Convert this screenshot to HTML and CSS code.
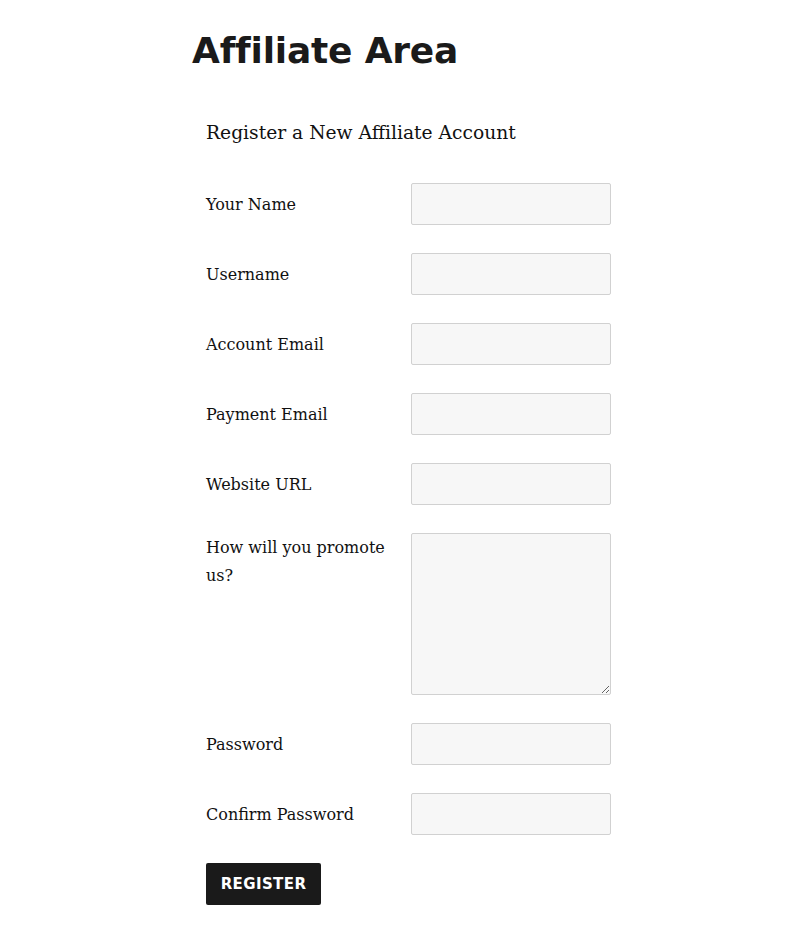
FILE: index.html
```html
<!DOCTYPE html>
<html lang="en">
<head>
<meta charset="utf-8">
<title>Affiliate Area</title>
<link rel="stylesheet" href="styles.css">
</head>
<body>
<main class="page">
  <h1 class="page-title">Affiliate Area</h1>
  <form class="register-form">
    <h3 class="form-title">Register a New Affiliate Account</h3>
    <div class="field">
      <label class="field-label">Your Name</label>
      <input class="field-input" type="text">
    </div>
    <div class="field">
      <label class="field-label">Username</label>
      <input class="field-input" type="text">
    </div>
    <div class="field">
      <label class="field-label">Account Email</label>
      <input class="field-input" type="text">
    </div>
    <div class="field">
      <label class="field-label">Payment Email</label>
      <input class="field-input" type="text">
    </div>
    <div class="field">
      <label class="field-label">Website URL</label>
      <input class="field-input" type="text">
    </div>
    <div class="field">
      <label class="field-label field-label--top">How will you promote us?</label>
      <textarea class="field-input field-textarea"></textarea>
    </div>
    <div class="field">
      <label class="field-label">Password</label>
      <input class="field-input" type="password">
    </div>
    <div class="field">
      <label class="field-label">Confirm Password</label>
      <input class="field-input" type="password">
    </div>
    <button class="submit-btn" type="button">Register</button>
  </form>
</main>
</body>
</html>
```
FILE: styles.css
```css
html, body {
  margin: 0;
  padding: 0;
  background: #ffffff;
}
body {
  font-family: "DejaVu Serif", "Liberation Serif", serif;
  color: #111111;
}
.page {
  padding: 23px 0 0 192px;
}
.page-title {
  margin: 0;
  font-family: "DejaVu Sans", "Liberation Sans", sans-serif;
  font-weight: bold;
  font-size: 36px;
  line-height: 56px;
  color: #1a1a1a;
  letter-spacing: -0.2px;
}
.register-form {
  margin-left: 14px;
  width: 405px;
  display: flex;
  flex-direction: column;
  gap: 28px;
}
.form-title {
  margin: 38px 0 6px;
  font-weight: normal;
  font-size: 18.7px;
  line-height: 32px;
}
.field {
  display: flex;
  align-items: flex-start;
}
.field-label {
  width: 205px;
  flex: none;
  font-size: 16px;
  line-height: 28px;
  padding-top: 8px;
  padding-right: 20px;
  box-sizing: border-box;
}
.field-label--top {
  padding-top: 1px;
}
.field-input {
  width: 200px;
  height: 42px;
  box-sizing: border-box;
  background: #f7f7f7;
  border: 1px solid #d1d1d1;
  border-radius: 2px;
  margin: 0;
  padding: 6px;
  font: inherit;
}
.field-textarea {
  height: 162px;
  resize: vertical;
  display: block;
}
.submit-btn {
  align-self: flex-start;
  width: 115px;
  height: 42px;
  background: #1a1a1a;
  color: #ffffff;
  border: none;
  border-radius: 2px;
  font-family: "DejaVu Sans", "Liberation Sans", sans-serif;
  font-weight: bold;
  font-size: 15px;
  text-transform: uppercase;
  letter-spacing: 0.4px;
  padding: 0;
}
```
